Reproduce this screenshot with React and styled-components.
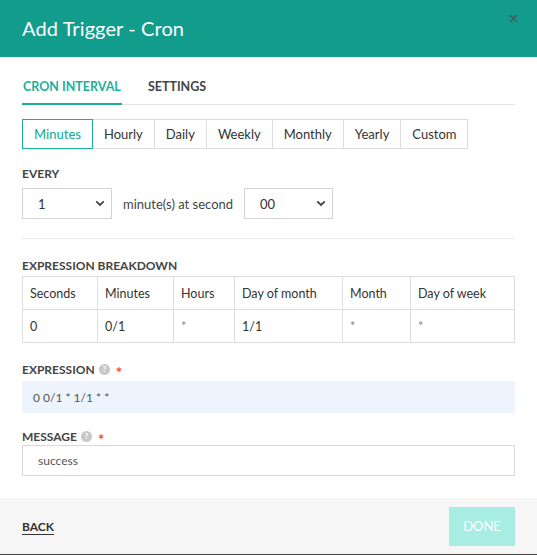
import React from "react";
import styled, { createGlobalStyle } from "styled-components";

const GlobalStyle = createGlobalStyle`
  html, body {
    margin: 0;
    padding: 0;
    background: #fff;
  }
  body {
    font-family: Lato, "Open Sans", sans-serif;
    color: #333;
  }
`;

const intervals = ["Minutes", "Hourly", "Daily", "Weekly", "Monthly", "Yearly", "Custom"];
const columns = [
  { head: "Seconds", value: "0", w: 75 },
  { head: "Minutes", value: "0/1", w: 76 },
  { head: "Hours", value: "*", w: 61 },
  { head: "Day of month", value: "1/1", w: 108 },
  { head: "Month", value: "*", w: 68 },
  { head: "Day of week", value: "*", w: null },
];

const HelpIcon = () => (
  <svg width="11" height="11" viewBox="0 0 12 12">
    <circle cx="6" cy="6" r="6" fill="#c8c8c8" />
    <text x="6" y="9.2" textAnchor="middle" fontSize="9" fontWeight="700" fill="#fff" fontFamily="Lato, sans-serif">?</text>
  </svg>
);

const Chevron = () => (
  <svg width="10" height="7" viewBox="0 0 10 7">
    <path d="M1.2 1.4 L5 5 L8.8 1.4" fill="none" stroke="#444" strokeWidth="1.8" />
  </svg>
);

const Select = ({ value, width }) => (
  <SelectBox $w={width}>
    <span>{value}</span>
    <Chevron />
  </SelectBox>
);

const App = () => {
  return (
    <Modal>
      <GlobalStyle />
      <Header>
        <Title>Add Trigger - Cron</Title>
        <Close>
          <svg width="9" height="9" viewBox="0 0 9 9">
            <path d="M1 1 L8 8 M8 1 L1 8" stroke="#4a5a58" strokeWidth="1.6" />
          </svg>
        </Close>
      </Header>

      <Body>
        <Tabs>
          <Tab $active>Cron Interval</Tab>
          <Tab>Settings</Tab>
        </Tabs>

        <ButtonGroup>
          {intervals.map((name, i) => (
            <IntervalButton key={name} $active={i === 0}>
              {name}
            </IntervalButton>
          ))}
        </ButtonGroup>

        <Label $top={17}>Every</Label>
        <EveryRow>
          <Select value="1" width={90} />
          <Inline>minute(s) at second</Inline>
          <Select value="00" width={89} />
        </EveryRow>

        <Divider />

        <Label $top={19}>Expression breakdown</Label>
        <Table>
          <tbody>
            <tr>
              {columns.map(c => (
                <Cell key={c.head} style={c.w ? { width: c.w } : undefined}>
                  {c.head}
                </Cell>
              ))}
            </tr>
            <tr>
              {columns.map(c => (
                <Cell key={c.head} $muted={c.value === "*"}>
                  {c.value}
                </Cell>
              ))}
            </tr>
          </tbody>
        </Table>

        <Label $top={19}>
          Expression <HelpIcon /> <Required>*</Required>
        </Label>
        <ExpressionBox>0 0/1 * 1/1 * *</ExpressionBox>

        <Label $top={16}>
          Message <HelpIcon /> <Required>*</Required>
        </Label>
        <MessageInput>success</MessageInput>
      </Body>

      <Footer>
        <BackLink>Back</BackLink>
        <DoneButton>Done</DoneButton>
      </Footer>
    </Modal>
  );
};

export default App;

const Modal = styled.div`
  width: 537px;
  height: 555px;
  display: flex;
  flex-direction: column;
  background: #fff;
  border-bottom: 1px solid #444;
  box-sizing: border-box;
  overflow: hidden;
`;

const Header = styled.div`
  height: 57px;
  flex-shrink: 0;
  background: #119c8c;
  display: flex;
  align-items: center;
  justify-content: space-between;
  padding: 0 18px 0 22px;
  position: relative;
`;

const Title = styled.h1`
  margin: 0 0 1px;
  font-size: 20px;
  font-weight: 400;
  color: #fff;
  letter-spacing: 0.1px;
`;

const Close = styled.div`
  position: absolute;
  top: 14px;
  right: 19px;
  display: flex;
`;

const Body = styled.div`
  padding: 0 22px;
  flex: 1;
`;

const Tabs = styled.div`
  display: flex;
  gap: 25px;
  margin-top: 19px;
  border-bottom: 1px solid #e3e3e3;
`;

const Tab = styled.div`
  font-size: 12.5px;
  font-weight: 700;
  text-transform: uppercase;
  color: ${p => (p.$active ? "#1bb09d" : "#444")};
  height: 27px;
  line-height: 22px;
  padding: 0 1px;
  border-bottom: 2px solid ${p => (p.$active ? "#1bb09d" : "transparent")};
  margin-bottom: -1px;
`;

const ButtonGroup = styled.div`
  display: flex;
  margin-top: 14px;
`;

const IntervalButton = styled.div`
  height: 30px;
  box-sizing: border-box;
  padding: 0 11px;
  display: flex;
  align-items: center;
  font-size: 13px;
  font-weight: ${p => (p.$active ? 500 : 400)};
  color: ${p => (p.$active ? "#1bb09d" : "#333")};
  border: 1px solid ${p => (p.$active ? "#1bb09d" : "#dcdcdc")};
  margin-left: -1px;
  position: relative;
  z-index: ${p => (p.$active ? 1 : 0)};

  &:first-child {
    margin-left: 0;
  }
`;

const Label = styled.div`
  margin-top: ${p => p.$top}px;
  font-size: 12px;
  font-weight: 700;
  text-transform: uppercase;
  color: #444;
  display: flex;
  align-items: center;
  gap: 2px;
  line-height: 15px;

  svg {
    margin-left: 2px;
  }
`;

const Required = styled.span`
  color: #e8473f;
  font-size: 15px;
  margin-left: 4px;
  line-height: 12px;
  position: relative;
  top: 2px;
`;

const EveryRow = styled.div`
  display: flex;
  align-items: center;
  margin-top: 7px;
`;

const SelectBox = styled.div`
  width: ${p => p.$w}px;
  height: 31px;
  box-sizing: border-box;
  border: 1px solid #d4d4d4;
  display: flex;
  align-items: center;
  justify-content: space-between;
  padding: 0 6px 0 15px;
  font-size: 13px;
  color: #333;
`;

const Inline = styled.span`
  font-size: 13px;
  color: #444;
  margin: 0 11px;
`;

const Divider = styled.div`
  height: 1px;
  background: #ececec;
  margin-top: 19px;
`;

const Table = styled.table`
  width: 100%;
  margin-top: 3px;
  border-collapse: collapse;
  font-size: 12.5px;
`;

const Cell = styled.td`
  border: 1px solid #dedede;
  height: 33px;
  padding: 0 7px;
  color: ${p => (p.$muted ? "#888" : "#333")};
  box-sizing: border-box;
`;

const ExpressionBox = styled.div`
  margin-top: 4px;
  height: 32px;
  background: #eef4fd;
  display: flex;
  align-items: center;
  padding: 0 11px;
  font-size: 12px;
  color: #555;
`;

const MessageInput = styled.div`
  margin-top: 1px;
  height: 31px;
  box-sizing: border-box;
  border: 1px solid #d8d8de;
  display: flex;
  align-items: center;
  padding: 0 15px;
  font-size: 12px;
  color: #555;
`;

const Footer = styled.div`
  height: 56px;
  flex-shrink: 0;
  background: #f6f6f6;
  display: flex;
  align-items: center;
  justify-content: space-between;
  padding: 0 22px;
`;

const BackLink = styled.a`
  font-size: 12px;
  font-weight: 700;
  text-transform: uppercase;
  color: #333;
  text-decoration: underline;
  text-underline-offset: 3px;
  margin-top: 1px;
`;

const DoneButton = styled.div`
  width: 66px;
  height: 39px;
  background: #a8ede4;
  color: #fff;
  font-size: 13px;
  text-transform: uppercase;
  display: flex;
  align-items: center;
  justify-content: center;
`;
